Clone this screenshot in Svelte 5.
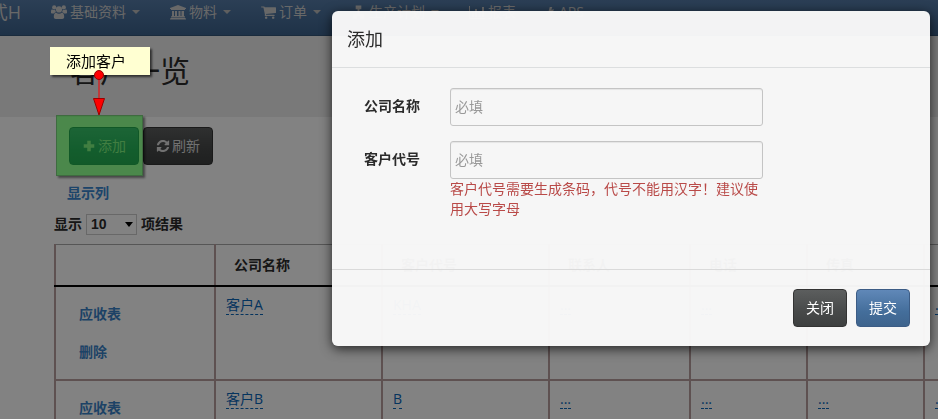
<script lang="ts">
  type Customer = { name: string; code: string }

  const menus = [
    { label: '基础资料', icon: 'users', dropdown: true },
    { label: '物料', icon: 'bank', dropdown: true },
    { label: '订单', icon: 'cart', dropdown: true },
    { label: '生产计划', icon: 'plan', dropdown: true },
    { label: '报表', icon: 'chart', dropdown: false },
    { label: 'APS', icon: 'bolt', dropdown: false },
  ]

  const columns = ['公司名称', '客户代号', '联系人', '电话', '传真', '地址']

  const customers: Customer[] = [
    { name: '客户A', code: 'KHA' },
    { name: '客户B', code: 'B' },
  ]

  let pageSize = $state('10')
  let company = $state('')
  let code = $state('')
</script>

{#snippet icon(name: string)}
  <svg class="icon icon-{name}" viewBox="0 0 16 16" aria-hidden="true">
    {#if name === 'users'}
      <circle cx="3.2" cy="3.4" r="2.1" />
      <circle cx="12.8" cy="3.4" r="2.1" />
      <circle cx="8" cy="5.4" r="3.1" />
      <path d="M0 9V7.4C0 6 .6 5.4 1.4 5.6c1 .6 2 .6 2.9.3A4 4 0 0 0 5.2 8.3C4.2 8.3 3.6 8.7 3 9.4H1Q0 9.4 0 9zM16 9V7.4c0-1.4-.6-2-1.4-1.8-1 .6-2 .6-2.9.3a4 4 0 0 1-.9 2.4c1 0 1.6.4 2.2 1.1h2q1 0 1-.4z" />
      <path d="M2.8 13c0-2.5.6-4.2 2.4-4.2.8.7 1.7 1 2.8 1s2-.3 2.8-1c1.8 0 2.4 1.700 2.400 4.200 0 1.300-.8 2-2 2H4.800c-1.200 0-2-.7-2-2z" />
    {:else if name === 'bank'}
      <path d="M8 1l8 3v1h-1v1H1V5H0V4zM2 7h2v5h1V7h2v5h1.500V7h2v5h1V7H14v5h.5l.5 1v.5H1V13l.5-1H2zM.5 14h15l.5 1.500H0z" />
    {:else if name === 'cart'}
      <path d="M0 2.500Q0 2 .6 2h2.600q.7 0 .9 1H15.400q.6 0 .6.600v4.800q0 .5-.5.600L5.300 10.200 5.500 11H14q.6 0 .6.600t-.6.600H4.600q-.6 0-.6-.6l.2-.8L2.600 3.200h-2Q0 3.200 0 2.500z" />
      <circle cx="5.500" cy="14" r="1.300" />
      <circle cx="13" cy="14" r="1.300" />
    {:else if name === 'plan'}
      <path d="M5 1h6v4H9v5h5v5h-4v-3H6v3H2v-5h5V5H5z" />
    {:else if name === 'chart'}
      <path d="M0 2h1v12h15v1H0zM3 8h2v5H3zM6 5h2v8H6zM9.500 7h2v6h-2zM13 3h2v10h-2z" />
    {:else if name === 'bolt'}
      <path d="M6 0h4L8.500 4.500 13 3.500 6.500 16 8 8 3.500 9z" />
    {:else if name === 'plus'}
      <path d="M6 2h4v4h4v4h-4v4H6v-4H2V6h4z" />
    {:else if name === 'refresh'}
      <path d="M1 7C1.600 3.600 4.500 1.200 8 1.200c1.800 0 3.400.7 4.700 1.900L14.200 1.600 15 2v5H10l-.3-.8 1.500-1.500A4.700 4.700 0 0 0 8 3.500C6 3.500 4.300 4.800 3.600 6.700L3.300 7zM15 9.200c-.6 3.300-3.500 5.700-7 5.700-1.800 0-3.400-.7-4.700-1.900L1.800 14.500 1 14V9.200h5l.3.7-1.500 1.500c.9.8 2 1.300 3.200 1.300 2 0 3.700-1.300 4.400-3.200l.3-.3z" />
    {/if}
  </svg>
{/snippet}

<div class="page">
  <nav class="navbar">
    <a class="brand" href="#home">正式H</a>
    {#each menus as menu (menu.label)}
      <a class="menu" href="#menu">
        {@render icon(menu.icon)}
        <span>{menu.label}</span>
        {#if menu.dropdown}
          <span class="caret"></span>
        {/if}
      </a>
    {/each}
  </nav>

  <header class="heading">
    <h1>客户一览</h1>
  </header>

  <main>
    <div class="toolbar">
      <button class="btn btn-primary">{@render icon('plus')}添加</button>
      <button class="btn btn-inverse">{@render icon('refresh')}刷新</button>
    </div>
    <a class="toggle-columns" href="#columns">显示列</a>

    <div class="page-size">
      <label for="page-size">显示</label>
      <span class="select">
        <select id="page-size" bind:value={pageSize}>
          <option>10</option>
          <option>25</option>
          <option>50</option>
        </select>
      </span>
      <span>项结果</span>
    </div>

    <table>
      <colgroup>
        <col class="col-actions" />
        <col class="col-wide" />
        <col class="col-wide" />
        <col class="col-contact" />
        <col class="col-narrow" />
        <col class="col-narrow" />
        <col class="col-narrow" />
      </colgroup>
      <thead>
        <tr>
          <th></th>
          {#each columns as column}
            <th>{column}</th>
          {/each}
        </tr>
      </thead>
      <tbody>
        {#each customers as customer (customer.name)}
          <tr>
            <td class="actions">
              <a href="#receivable">应收表</a>
              <a href="#delete">删除</a>
            </td>
            <td><a class="editable" href="#edit">{customer.name}</a></td>
            <td><a class="editable" href="#edit">{customer.code}</a></td>
            {#each columns.slice(2) as _}
              <td><a class="editable" href="#edit">...</a></td>
            {/each}
          </tr>
        {/each}
      </tbody>
    </table>
  </main>
</div>

<div class="backdrop"></div>

<form class="modal" aria-labelledby="modal-title">
  <div class="modal-header">
    <h3 id="modal-title">添加</h3>
  </div>
  <div class="modal-body">
    <label for="company">公司名称</label>
    <input id="company" type="text" placeholder="必填" bind:value={company} />
    <label for="code">客户代号</label>
    <div>
      <input id="code" type="text" placeholder="必填" bind:value={code} />
      <p class="help">客户代号需要生成条码，代号不能用汉字！建议使用大写字母</p>
    </div>
  </div>
  <div class="modal-footer">
    <button type="button" class="btn btn-inverse">关闭</button>
    <button type="button" class="btn btn-primary">提交</button>
  </div>
</form>

<!-- Guide note pointing at the add button -->
<div class="highlight"></div>
<div class="note">添加客户</div>
<svg class="arrow" viewBox="0 0 14 46" aria-hidden="true">
  <path d="M7 5v24" stroke="#f00" />
  <circle cx="7" cy="5" r="4.500" fill="#f00" stroke="#900" />
  <path d="M1.500 28.500h11L7 45z" fill="#f00" stroke="#900" />
</svg>

<style>
  :global(body) {
    overflow: hidden;
    background: #fff;
    color: #2b2b2b;
    font: 14px/20px 'Open Sans', 'Noto Sans CJK SC', sans-serif;
  }

  a {
    text-decoration: none;
  }

  h1,
  h3,
  p {
    margin: 0;
    font-weight: 400;
  }

  .page {
    overflow: hidden;
  }

  .icon {
    width: 16px;
    height: 16px;
    flex-shrink: 0;
    fill: currentColor;
  }

  .icon-cart,
  .icon-plan {
    width: 15px;
  }

  .icon-bolt {
    width: 10px;
  }

  /* -- Navbar -- */
  .navbar {
    display: flex;
    align-items: flex-start;
    gap: 30px;
    height: 36px;
    box-sizing: border-box;
    padding-top: 2px;
    margin-left: -34px;
    background: linear-gradient(#567ca8, #3c628c);
    border-bottom: 1px solid #345578;
    white-space: nowrap;
  }

  .brand,
  .menu {
    color: #ccc;
  }

  .brand {
    font-size: 18px;
    width: 55px;
    text-align: right;
  }

  .menu {
    display: flex;
    align-items: center;
    gap: 3px;
  }

  .caret {
    margin-left: 3px;
    border: 4px solid transparent;
    border-top-color: #bbb;
    border-bottom: 0;
  }

  /* -- Page -- */
  .heading {
    padding: 15px 70px 26px;
    background: #eee;
  }

  h1 {
    font-size: 30px;
    line-height: 40px;
  }

  main {
    padding: 10px 0 0 54px;
  }

  .toolbar {
    display: flex;
    gap: 4px;
    padding-left: 15px;
  }

  .btn {
    display: flex;
    align-items: center;
    gap: 2px;
    height: 38px;
    padding: 0 12px;
    border: 1px solid;
    border-radius: 4px;
    color: #fff;
    font: inherit;
    white-space: nowrap;
  }

  .toolbar .btn {
    color: #ddd;
  }

  .btn .icon {
    width: 14px;
    height: 14px;
  }

  .btn-primary {
    background: linear-gradient(#6088b8, #446e9b 60%, #3e648d);
    border-color: #3c5c85;
  }

  .btn-inverse {
    background: linear-gradient(#5c5e5e, #474949 60%, #3e4040);
    border-color: #333;
  }

  .toggle-columns {
    display: block;
    padding: 18px 13px 10px;
    color: #3a87d0;
    font-weight: 700;
  }

  .page-size {
    display: flex;
    align-items: center;
    gap: 4px;
    height: 22px;
    margin-bottom: 9px;
    font-weight: 700;
  }

  .select {
    position: relative;
  }

  .select::after {
    content: '';
    position: absolute;
    top: 8px;
    right: 4px;
    border: 4px solid transparent;
    border-top: 5px solid #000;
    border-bottom: 0;
  }

  select {
    display: block;
    appearance: none;
    width: 51px;
    height: 21px;
    padding: 0 4px;
    border: 1px solid #ccc;
    background: #fff;
    color: inherit;
    font: 700 14px 'Liberation Sans', sans-serif;
  }

  /* -- Table -- */
  table {
    table-layout: fixed;
    width: 986px;
    border-collapse: collapse;
  }

  .col-actions {
    width: 160px;
  }

  .col-wide {
    width: 167px;
  }

  .col-contact {
    width: 141px;
  }

  .col-narrow {
    width: 117px;
  }

  th,
  td {
    box-sizing: border-box;
    border: 2px solid #b8a0a0;
    text-align: left;
    vertical-align: top;
  }

  th {
    height: 41px;
    padding: 10px 18px;
    border-top: 1px solid #aaa;
    border-bottom-color: #000;
  }

  td {
    height: 94px;
    padding: 8px 10px;
  }

  tbody tr:first-child td {
    border-top-color: #000;
  }

  .actions {
    padding: 17px 23px;
  }

  .actions a {
    display: block;
    margin-bottom: 18px;
    color: #3a82c8;
    font-weight: 700;
  }

  .actions a:last-child {
    margin-bottom: 0;
  }

  .editable {
    color: #0a66b8;
    border-bottom: 1px dashed #0a66b8;
  }

  /* -- Modal -- */
  .backdrop {
    position: fixed;
    inset: 0;
    background: rgba(0, 0, 0, 0.49);
  }

  .modal {
    position: fixed;
    top: 11px;
    right: 8px;
    width: 598px;
    max-width: calc(100% - 16px);
    border-radius: 6px;
    background: rgba(250, 250, 250, 0.97);
    box-shadow: 0 3px 12px rgba(0, 0, 0, 0.7);
  }

  .modal-header {
    padding: 13px 15px;
    border-bottom: 1px solid #dcdedf;
  }

  h3 {
    font-size: 18px;
    line-height: 30px;
  }

  .modal-body {
    display: grid;
    grid-template-columns: 56px 313px;
    gap: 15px 30px;
    padding: 20px 32px 50px;
  }

  .modal-body label {
    padding-top: 8px;
    font-weight: 700;
  }

  input {
    display: block;
    box-sizing: border-box;
    width: 100%;
    height: 38px;
    padding: 0 4px 2px;
    border: 1px solid #c4c4c4;
    border-radius: 3px;
    background: transparent;
    box-shadow: inset 0 1px 1px rgba(0, 0, 0, 0.07);
    font: inherit;
  }

  input::placeholder {
    color: #999;
  }

  .help {
    color: #b94a48;
  }

  .modal-footer {
    display: flex;
    justify-content: flex-end;
    gap: 9px;
    padding: 19px 20px;
    border-top: 1px solid #dadada;
  }

  /* -- Guide note -- */
  .highlight,
  .note,
  .arrow {
    position: absolute;
  }

  .highlight {
    top: 115px;
    left: 56px;
    width: 85px;
    height: 59px;
    border: 1px solid #3f6b40;
    background: rgba(0, 145, 0, 0.42);
    box-shadow: 2px 2px 2px rgba(0, 0, 0, 0.45);
  }

  .note {
    top: 47px;
    left: 50px;
    padding: 4px 24px 4px 16px;
    background: #ffffd2;
    box-shadow: 2px 2px 2px rgba(0, 0, 0, 0.6);
    color: #000;
    font-size: 15px;
  }

  .arrow {
    top: 70px;
    left: 92px;
    width: 14px;
    height: 46px;
  }
</style>
